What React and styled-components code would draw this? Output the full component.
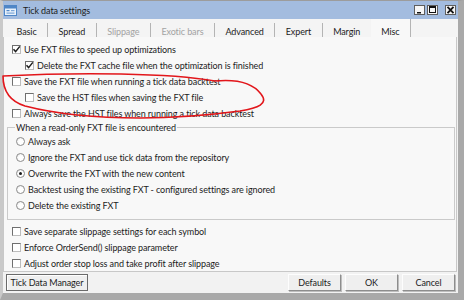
import React from 'react';
import styled, { createGlobalStyle } from 'styled-components';

const GlobalStyle = createGlobalStyle`
  body {
    margin: 0;
    background: #a9a9a9;
    font-family: Lato, "Open Sans", sans-serif;
    font-size: 9px;
    letter-spacing: -0.1px;
    color: #1c1c1c;
  }
`;

const Window = styled.div`
  position: relative;
  width: 464px;
  height: 300px;
  box-sizing: border-box;
  display: flex;
  flex-direction: column;
  background: #f2f2f2;
  border-top: 1px solid #9c9c9c;
  border-left: 3px solid #c9c9c9;
  border-right: 6px solid #a9a9a9;
  border-bottom: 7px solid #a9a9a9;
`;

const TitleBar = styled.div`
  height: 18px;
  display: flex;
  align-items: center;
  background: #a3bcdf;
  padding-left: 1px;
`;

const TitleText = styled.span`
  margin-left: 6px;
  flex: 1;
`;

const Controls = styled.div`
  display: flex;
  align-items: center;
  gap: 2px;
  margin-right: 2px;
`;

const CtlButton = styled.div`
  width: 11px;
  height: 10px;
  box-sizing: border-box;
  border: 1px solid #5e5e5e;
  background: #f6f6f6;
  display: flex;
  align-items: center;
  justify-content: center;
  margin-left: ${(p) => (p.$gap ? '5px' : '0')};
`;

const TabStrip = styled.div`
  height: 18px;
  display: flex;
  background: #f4f4f4;
  padding-left: 3px;
`;

const Tab = styled.div`
  padding: 3px 10.5px 0;
  color: ${(p) => (p.$disabled ? '#a3a3a3' : '#1c1c1c')};
  border-right: ${(p) => (p.$sep ? '1px solid #b4b4b4' : 'none')};
  margin-top: ${(p) => (p.$active ? '0' : '4px')};
  padding-top: ${(p) => (p.$active ? '7px' : '3px')};
  background: ${(p) => (p.$active ? '#f8f8f8' : 'transparent')};
`;

const Panel = styled.div`
  height: 235px;
  box-sizing: border-box;
  background: #f8f8f8;
  border: 1px solid #c8c8c8;
  border-top: none;
  padding-top: 4px;
  margin-right: 1px;
`;

const Row = styled.div`
  height: 16px;
  display: flex;
  align-items: center;
  gap: 3px;
  padding-left: ${(p) => (p.$indent ? '21px' : '8px')};
`;

const Box = styled.span`
  width: 9px;
  height: 9px;
  box-sizing: border-box;
  border: 1px solid;
  border-color: #6f6f6f #bcbcbc #bcbcbc #6f6f6f;
  background: #fff;
  position: relative;
  flex: none;
`;

const Group = styled.fieldset`
  margin: 1px 1px 0 3px;
  padding: 0 0 6px 8px;
  border: 1px solid #cacaca;
  min-width: 0;
`;

const Legend = styled.legend`
  padding: 0 1px;
  margin-left: -1px;
  line-height: 11px;
`;

const RadioRow = styled.div`
  height: 16px;
  display: flex;
  align-items: center;
  gap: 3px;
`;

const Radio = styled.span`
  width: 9px;
  height: 9px;
  box-sizing: border-box;
  border-radius: 50%;
  border: 1px solid #8c8c8c;
  background: radial-gradient(circle at 60% 60%, #fff 40%, #e4e4e4);
  display: flex;
  align-items: center;
  justify-content: center;
  flex: none;
  &::after {
    content: '';
    width: 3px;
    height: 3px;
    border-radius: 50%;
    background: ${(p) => (p.$on ? '#1a1a1a' : 'transparent')};
  }
`;

const BottomRows = styled.div`
  margin-top: 3px;
`;

const ButtonBar = styled.div`
  flex: 1;
  display: flex;
  align-items: center;
  gap: 4px;
  padding: 0 3px;
`;

const Button = styled.div`
  height: 17px;
  box-sizing: border-box;
  width: ${(p) => p.$w}px;
  display: flex;
  align-items: center;
  justify-content: center;
  background: #efefef;
  border: 1px solid;
  border-color: ${(p) =>
    p.$default ? '#6a6a6a' : '#fdfdfd #8d8d8d #8d8d8d #fdfdfd'};
  box-shadow: ${(p) => (p.$default ? 'inset 1px 1px 0 #fff' : '1px 1px 0 #bdbdbd')};
  margin-left: ${(p) => (p.$push ? 'auto' : '0')};
`;

const Scribble = styled.svg`
  position: absolute;
  top: -1px;
  left: -3px;
  pointer-events: none;
`;

const Check = ({ on, indent, children }) => (
  <Row $indent={indent}>
    <Box>
      {on && (
        <svg width="9" height="9" viewBox="0 0 9 9" style={{ position: 'absolute', left: -1, top: -1 }}>
          <path d="M1.5 4.2 L3.6 6.6 L7.8 1.4" fill="none" stroke="#1e1e1e" strokeWidth="1.5" />
        </svg>
      )}
    </Box>
    <span>{children}</span>
  </Row>
);

const AppIcon = () => (
  <svg width="13" height="11" viewBox="0 0 13 11">
    <rect x="0.5" y="0.5" width="12" height="10" fill="#e8f1fb" stroke="#4f86c6" />
    <rect x="1" y="1" width="11" height="2.5" fill="#4f86c6" />
    <rect x="2.5" y="5" width="3" height="1.2" fill="#4f86c6" />
    <rect x="7" y="5" width="3.5" height="1.2" fill="#7aa6d8" />
    <rect x="2.5" y="7.5" width="8" height="1.2" fill="#7aa6d8" />
  </svg>
);

const tabs = [
  { t: 'Basic', sep: true },
  { t: 'Spread', sep: true },
  { t: 'Slippage', sep: true, disabled: true },
  { t: 'Exotic bars', sep: true, disabled: true },
  { t: 'Advanced', sep: true },
  { t: 'Expert', sep: true },
  { t: 'Margin' },
  { t: 'Misc', sep: true, active: true },
];

const radios = [
  'Always ask',
  'Ignore the FXT and use tick data from the repository',
  'Overwrite the FXT with the new content',
  'Backtest using the existing FXT - configured settings are ignored',
  'Delete the existing FXT',
];

export default function App() {
  return (
    <>
      <GlobalStyle />
      <Window>
        <TitleBar>
          <AppIcon />
          <TitleText>Tick data settings</TitleText>
          <Controls>
            <CtlButton>
              <svg width="9" height="8" viewBox="0 0 9 8">
                <rect x="2" y="6" width="4" height="1.5" fill="#111" />
              </svg>
            </CtlButton>
            <CtlButton>
              <svg width="9" height="8" viewBox="0 0 9 8">
                <rect x="1.5" y="0.5" width="6" height="6" fill="none" stroke="#111" />
                <rect x="1.5" y="0.5" width="6" height="1.5" fill="#111" />
              </svg>
            </CtlButton>
            <CtlButton $gap>
              <svg width="9" height="8" viewBox="0 0 9 8">
                <path d="M1.5 0.8 L7.5 7.2 M7.5 0.8 L1.5 7.2" stroke="#111" strokeWidth="1.8" />
              </svg>
            </CtlButton>
          </Controls>
        </TitleBar>

        <TabStrip>
          {tabs.map((x) => (
            <Tab key={x.t} $sep={x.sep} $disabled={x.disabled} $active={x.active}>
              {x.t}
            </Tab>
          ))}
        </TabStrip>

        <Panel>
          <Check on>Use FXT files to speed up optimizations</Check>
          <Check on indent>Delete the FXT cache file when the optimization is finished</Check>
          <Check>Save the FXT file when running a tick data backtest</Check>
          <Check indent>Save the HST files when saving the FXT file</Check>
          <Check>Always save the HST files when running a tick data backtest</Check>

          <Group>
            <Legend>When a read-only FXT file is encountered</Legend>
            {radios.map((r, i) => (
              <RadioRow key={r}>
                <Radio $on={i === 2} />
                <span>{r}</span>
              </RadioRow>
            ))}
          </Group>

          <BottomRows>
            <Check>Save separate slippage settings for each symbol</Check>
            <Check>Enforce OrderSend() slippage parameter</Check>
            <Check>Adjust order stop loss and take profit after slippage</Check>
          </BottomRows>
        </Panel>

        <ButtonBar>
          <Button $w={82} $default>Tick Data Manager</Button>
          <Button $w={53} $push>Defaults</Button>
          <Button $w={53}>OK</Button>
          <Button $w={53}>Cancel</Button>
        </ButtonBar>

        <Scribble width="464" height="300" viewBox="0 0 464 300">
          <path
            d="M3 76 C 80 72, 170 73, 215 81 C 236 79, 252 82, 261 94 C 269 104, 258 108, 240 111 C 210 115, 180 118, 140 118 C 100 118, 60 115, 25 106 C 9 101, 3 90, 3 76"
            fill="none"
            stroke="#e2161b"
            strokeWidth="1.6"
            strokeLinecap="round"
          />
        </Scribble>
      </Window>
    </>
  );
}
